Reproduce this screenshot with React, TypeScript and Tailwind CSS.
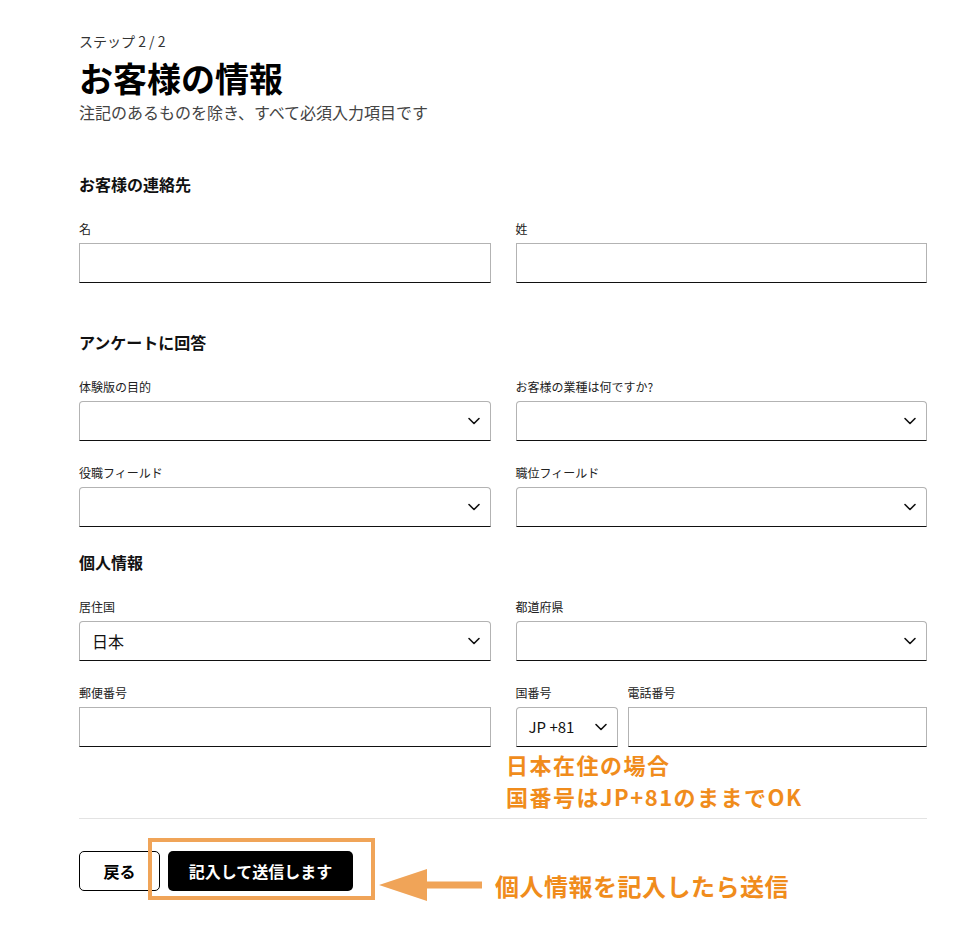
import React from "react";

const font = {
  fontFamily: '"Noto Sans CJK JP", "Noto Sans", "Liberation Sans", sans-serif',
};

function Chevron() {
  return (
    <svg width="14" height="14" viewBox="0 0 14 14" className="shrink-0">
      <polyline
        points="2,4.5 7,9.5 12,4.5"
        fill="none"
        stroke="#111"
        strokeWidth="1.6"
        strokeLinecap="round"
        strokeLinejoin="round"
      />
    </svg>
  );
}

function Label({ children }: { children: React.ReactNode }) {
  return <div className="text-[12px] leading-[18px] text-[#222] mb-[5px]">{children}</div>;
}

function TextField({ label }: { label: string }) {
  return (
    <div>
      <Label>{label}</Label>
      <div className="h-10 border border-[#b3b3b3] border-b-[#111] bg-white" />
    </div>
  );
}

function SelectField({ label, value }: { label: string; value?: string }) {
  return (
    <div>
      <Label>{label}</Label>
      <div className="h-10 border border-[#b3b3b3] border-b-[#111] rounded-t-[4px] bg-white flex items-center justify-between pl-3 pr-[9px]">
        <span className="text-[16px] text-[#111]">{value}</span>
        <Chevron />
      </div>
    </div>
  );
}

function SectionTitle({ children }: { children: React.ReactNode }) {
  return <h2 className="text-[16px] leading-[22px] font-bold text-[#111]">{children}</h2>;
}

export default function App() {
  return (
    <div className="min-h-[930px] w-[975px] bg-white" style={font}>
      <div className="ml-[79px] w-[848px] pt-[31px]">
        {/* Header */}
        <div className="text-[14px] leading-[20px] text-[#333]">ステップ 2 / 2</div>
        <h1 className="mt-[7px] text-[34px] leading-[40px] font-bold text-black">お客様の情報</h1>
        <p className="mt-[3px] text-[16px] leading-[22px] text-[#444]">
          注記のあるものを除き、すべて必須入力項目です
        </p>

        {/* Contact */}
        <div className="mt-[50px]">
          <SectionTitle>お客様の連絡先</SectionTitle>
          <div className="mt-[25px] grid grid-cols-2 gap-x-[25px]">
            <TextField label="名" />
            <TextField label="姓" />
          </div>
        </div>

        {/* Survey */}
        <div className="mt-[48px]">
          <SectionTitle>アンケートに回答</SectionTitle>
          <div className="mt-[25px] grid grid-cols-2 gap-x-[25px] gap-y-[23px]">
            <SelectField label="体験版の目的" />
            <SelectField label="お客様の業種は何ですか?" />
            <SelectField label="役職フィールド" />
            <SelectField label="職位フィールド" />
          </div>
        </div>

        {/* Personal */}
        <div className="mt-[24px]">
          <SectionTitle>個人情報</SectionTitle>
          <div className="mt-[25px] grid grid-cols-2 gap-x-[25px] gap-y-[23px]">
            <SelectField label="居住国" value="日本" />
            <SelectField label="都道府県" />
            <TextField label="郵便番号" />
            <div className="flex gap-[10px]">
              <div className="w-[102px]">
                <Label>国番号</Label>
                <div className="h-10 border border-[#b3b3b3] border-b-[#111] rounded-t-[4px] flex items-center justify-between pl-3 pr-[9px]">
                  <span className="text-[15px] text-[#111]">JP +81</span>
                  <Chevron />
                </div>
              </div>
              <div className="flex-1">
                <TextField label="電話番号" />
              </div>
            </div>
          </div>
        </div>

        {/* Note */}
        <div className="mt-[1px] pl-[427px] text-[22px] leading-[32px] tracking-[1.5px] font-bold text-[#f08c1c]">
          <div>日本在住の場合</div>
          <div>国番号はJP+81のままでOK</div>
        </div>

        <div className="mt-[6px] h-px bg-[#e3e3e3]" />

        {/* Actions */}
        <div className="relative mt-[32px] flex gap-2">
          <button className="h-10 w-[81px] rounded-[5px] border border-black bg-white text-[16px] font-bold text-black">
            戻る
          </button>
          <button className="h-10 w-[185px] rounded-[5px] bg-black text-[16px] font-bold text-white">
            記入して送信します
          </button>

          <div className="absolute left-[69px] top-[-13px] h-[62px] w-[227px] border-4 border-[#f0a458]" />
          <svg
            className="absolute left-[300px] top-[18px]"
            width="104"
            height="34"
            viewBox="0 0 104 34"
          >
            <polygon points="0,16 48,0 48,12.5 103,12.5 103,19.5 48,19.5 48,32" fill="#f0a458" />
          </svg>
          <div className="absolute left-[416px] top-[19px] text-[24px] leading-[31px] tracking-[0.5px] font-bold text-[#f08c1c] whitespace-nowrap">
            個人情報を記入したら送信
          </div>
        </div>
      </div>
    </div>
  );
}
